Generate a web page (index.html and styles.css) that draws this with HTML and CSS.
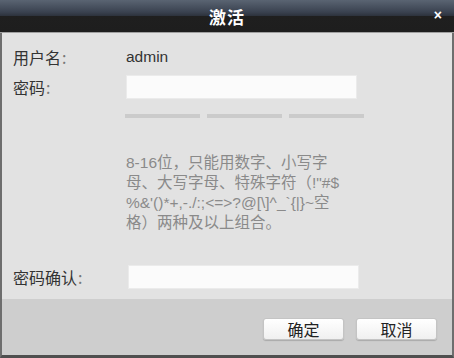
FILE: index.html
```html
<!DOCTYPE html>
<html lang="zh-CN">
<head>
<meta charset="utf-8">
<title>激活</title>
<link rel="stylesheet" href="styles.css">
</head>
<body>
<div class="dialog">
  <div class="titlebar">
    <span class="title">激活</span>
    <span class="close">×</span>
  </div>
  <div class="content">
    <div class="row row-user">
      <span class="label">用户名<span class="colon">:</span></span>
      <span class="value">admin</span>
    </div>
    <div class="row row-pwd">
      <span class="label">密码<span class="colon">:</span></span>
      <input class="field" type="password">
    </div>
    <div class="strength">
      <span class="bar"></span>
      <span class="bar"></span>
      <span class="bar"></span>
    </div>
    <p class="hint">8-16位，只能用数字、小写字<br>母、大写字母、特殊字符（!"#$<br>%&amp;'()*+,-./:;&lt;=&gt;?@[\]^_`{|}~空<br>格）两种及以上组合。</p>
    <div class="row row-confirm">
      <span class="label">密码确认<span class="colon">:</span></span>
      <input class="field" type="password">
    </div>
  </div>
  <div class="footer">
    <button class="btn">确定</button>
    <button class="btn">取消</button>
  </div>
</div>
</body>
</html>
```

FILE: styles.css
```css
html, body {
  margin: 0;
  padding: 0;
  background: #e2e2e2;
}
body {
  font-family: "Liberation Sans", "Noto Sans CJK SC", sans-serif;
  color: #333;
}
.dialog {
  width: 454px;
  height: 358px;
  display: flex;
  flex-direction: column;
  box-sizing: border-box;
}
.titlebar {
  height: 32px;
  flex: none;
  display: flex;
  align-items: center;
  justify-content: center;
  position: relative;
  background: linear-gradient(to bottom, #5a6472 0px, #3a4250 12px, #2c323c 16px, #1f1f1f 16px, #1e1e1e 32px);
  border-bottom: 1px solid #a0a0a0;
}
.title {
  color: #fff;
  font-weight: bold;
  font-size: 17px;
  font-family: "Noto Sans CJK SC", sans-serif;
  letter-spacing: 1px;
}
.close {
  position: absolute;
  right: 12px;
  top: 6px;
  color: #fff;
  font-weight: bold;
  font-size: 14px;
  line-height: 18px;
}
.content {
  height: 266px;
  flex: none;
  box-sizing: border-box;
  background: #e2e2e2;
  border-left: 2px solid #6e6e6e;
  border-right: 2px solid #6e6e6e;
  padding-left: 11px;
  display: flex;
  flex-direction: column;
}
.row {
  display: flex;
  align-items: center;
}
.label {
  width: 113px;
  flex: none;
  font-size: 16px;
  color: #333;
  font-family: "Noto Sans CJK SC", sans-serif;
}
.colon {
  color: #777;
  margin-left: 1px;
}
.value {
  font-size: 15.5px;
  color: #333;
}
.row-user {
  height: 22px;
  margin-top: 13px;
}
.row-pwd {
  margin-top: 7px;
}
.field {
  width: 231px;
  height: 24px;
  box-sizing: border-box;
  margin: 0;
  border: 1px solid #ebebeb;
  background: #fbfbfb;
  outline: none;
  padding: 0 4px;
}
.strength {
  display: flex;
  gap: 7px;
  margin-top: 15px;
  padding-left: 112px;
}
.bar {
  width: 75px;
  height: 4px;
  background: #cbcbcb;
}
.hint {
  margin: 35px 0 0 113px;
  font-size: 15.5px;
  line-height: 20px;
  color: #8a8a8a;
}
.row-confirm {
  margin-top: 32px;
}
.row-confirm .field {
  margin-left: 2px;
}
.footer {
  flex: 1;
  background: #cecece;
  border-left: 2px solid #6e6e6e;
  border-right: 2px solid #6e6e6e;
  border-bottom: 3px solid #4f4f4f;
  display: flex;
  justify-content: flex-end;
  align-items: flex-start;
  gap: 12px;
  padding: 19px 15px 0 0;
}
.btn {
  width: 81px;
  height: 22px;
  margin: 0;
  padding: 0;
  border: 1px solid #c4c4c4;
  border-radius: 3px;
  background: linear-gradient(to bottom, #ffffff, #f0f0f0);
  box-shadow: 0 1px 1px rgba(0,0,0,0.18);
  font-family: "Noto Sans CJK SC", sans-serif;
  font-size: 16px;
  line-height: 20px;
  color: #222;
}
```
